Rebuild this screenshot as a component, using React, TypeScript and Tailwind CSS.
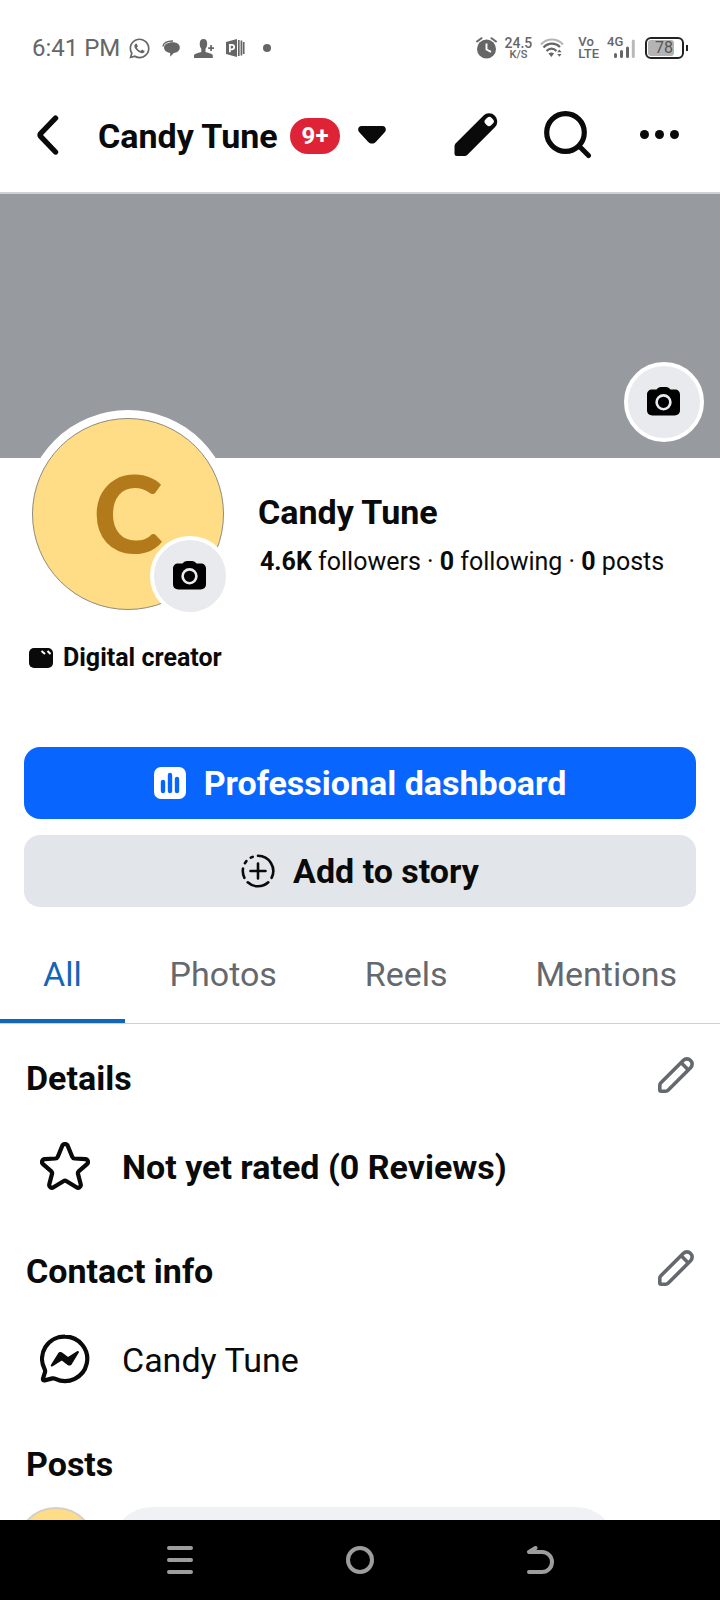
import { FaWhatsapp } from "react-icons/fa";

function ChatBubbleIcon() {
  return (
    <svg width="18" height="17" viewBox="0 0 18 17" fill="none">
      <path d="M.8 6.500C1.500 3 4.500 .9 11 1" stroke="#666" strokeWidth="1.300" />
      <path d="M10.500 2.200c4.600 0 7.300 2.200 7.300 5.200 0 3.200-2.600 5.200-6 5.500L8.200 16.800 8.200 13C4.800 12.600 2 10.500 2 7.600c0-3.100 3.500-5.400 8.500-5.400z" fill="#666" />
    </svg>
  );
}

function PersonAddIcon() {
  return (
    <svg width="20" height="19" viewBox="0 0 20 19" fill="#666">
      <path d="M9.500 0c2.600 0 3.700 2 3.700 4.800 0 2.300-.8 3.900-1.700 5V13c1.500.8 6.500 1.200 7.300 3.200V19H0v-2.800c.8-2 5.800-2.400 7.300-3.200V9.800c-.9-1.100-1.600-2.700-1.600-5C5.700 2 6.900 0 9.500 0z" />
      <path d="M16.200 6h1.700v2.200H20v1.700h-2.100v2.200h-1.700V9.900h-2V8.200h2z" />
    </svg>
  );
}

function OfficeIcon() {
  return (
    <svg width="19" height="18" viewBox="0 0 19 18" fill="none">
      <path d="M0 3l11-3v18L0 15z" fill="#666" />
      <path d="M3.900 13.200V5.800h2a2.200 2.200 0 0 1 0 4.600h-2" stroke="#fff" strokeWidth="1.700" />
      <path d="M12.800 1v16M15.400 1.500v15M17.700 3v12" stroke="#666" strokeWidth="1.700" />
    </svg>
  );
}

function AlarmIcon() {
  return (
    <svg width="21" height="22" viewBox="0 0 21 22" fill="none">
      <circle cx="10.500" cy="12" r="9.500" fill="#666" />
      <path d="M1 4.500L5.500 1.200M20 4.500L15.500 1.200" stroke="#666" strokeWidth="2" strokeLinecap="round" />
      <path d="M10.500 6.500v6l4.500 2.300" stroke="#fff" strokeWidth="1.900" />
    </svg>
  );
}

function WifiIcon() {
  return (
    <svg width="24" height="20" viewBox="0 0 24 20" fill="none" strokeWidth="2.200">
      <path d="M1 6.500C7-.2 17-.2 23 6.500" stroke="#b5b5b5" />
      <path d="M3.500 9.500c4.800-5 12-5 16.500-.4" stroke="#666" />
      <path d="M6.500 13c3-3.200 7-3.200 10 0" stroke="#666" />
      <path d="M8.500 15.500c1.600-1.500 4-1.500 5.600 0L11.300 19z" fill="#666" />
      <path d="M17.200 14.300l2.200-2.800 2.200 2.800zM17.200 16l2.200 2.800 2.200-2.800z" fill="#666" />
    </svg>
  );
}

function SignalIcon() {
  return (
    <svg width="28" height="21" viewBox="0 0 28 21" strokeWidth="3" strokeLinecap="round">
      <path d="M8.500 18.500v-2M14.500 18.500v-5M20.500 18.500V10" stroke="#666" />
      <path d="M26.300 18.500V3" stroke="#b9b9b9" />
    </svg>
  );
}

function Battery() {
  return (
    <div className="flex items-center gap-0.5">
      <div className="h-[22px] w-[39px] rounded-md border-2 border-[#222] p-px">
        <div className="flex h-full w-[26px] items-center justify-center rounded-[3px] bg-[#b4b4b4] pl-1.5 text-base leading-none text-[#555]">
          78
        </div>
      </div>
      <div className="h-1.5 w-0.5 bg-[#222]" />
    </div>
  );
}

function StatusBar() {
  return (
    <div className="flex h-20 items-center justify-between pt-4 pr-8 pl-8 text-[#666]">
      <div className="flex items-center">
        <span className="text-2xl">6:41 PM</span>
        <FaWhatsapp className="ml-2 size-[23px]" />
        <span className="ml-[11px]">
          <ChatBubbleIcon />
        </span>
        <span className="ml-3.5">
          <PersonAddIcon />
        </span>
        <span className="ml-3">
          <OfficeIcon />
        </span>
        <span className="ml-[18px] size-2 rounded-full bg-[#666]" />
      </div>
      <div className="flex items-center">
        <AlarmIcon />
        <div className="ml-2 flex flex-col items-center font-medium">
          <span className="text-[14px] leading-[14px]">24.5</span>
          <span className="text-[11px] leading-[10px]">K/S</span>
        </div>
        <span className="ml-2">
          <WifiIcon />
        </span>
        <div className="ml-3.5 flex flex-col text-[13px] leading-3 font-medium">
          <span>Vo</span>
          <span>LTE</span>
        </div>
        <div className="relative ml-2">
          <SignalIcon />
          <span className="absolute -top-0.5 left-0 text-[13px] leading-3 font-medium">4G</span>
        </div>
        <div className="ml-2.5">
          <Battery />
        </div>
      </div>
    </div>
  );
}

function SolidPencil() {
  return (
    <svg width="44" height="44" viewBox="0 0 44 44">
      <path
        d="M.5 33.500c0-1.400.5-2.600 1.500-3.600L29.300 2.700a8.200 8.200 0 0 1 11.600 11.600L13.700 41.600c-1 1-2.300 1.500-3.700 1.500H3A2.500 2.500 0 0 1 .5 40.600z"
        fill="#0a0a0a"
      />
      <rect x="-4" y="-4.500" width="8" height="8.500" rx="3" transform="translate(35 8.700) rotate(45)" fill="#fff" />
    </svg>
  );
}

function OutlinePencil() {
  return (
    <svg width="36" height="36" viewBox="0 0 36 36" fill="none" stroke="#65686c" strokeWidth="3.600" strokeLinejoin="round">
      <path d="M1.800 28.300c0-1 .4-1.900 1.100-2.600L25.200 3.400a5.200 5.200 0 0 1 7.400 7.400L10.300 33.100c-.7.700-1.600 1.100-2.600 1.100H3.300a1.500 1.500 0 0 1-1.500-1.500z" />
      <path d="M23 5.600l7.400 7.400" />
    </svg>
  );
}

function Header() {
  return (
    <header className="flex h-[114px] items-center justify-between border-b-2 border-[#cfd2d5] pr-[41px] pl-[35px]">
      <div className="flex items-center">
        <button aria-label="Back" className="pb-[3px]">
          <svg width="24" height="42" viewBox="0 0 24 42" fill="none" stroke="#0a0a0a" strokeWidth="5.400" strokeLinecap="round" strokeLinejoin="round">
            <path d="M20.500 4.200L5.600 19.600c-.8.800-.8 2 0 2.800L20.500 38" />
          </svg>
        </button>
        <button className="ml-[39px] flex items-center">
          <span className="text-[34px] leading-10 font-bold">Candy Tune</span>
          <span className="ml-3 flex h-9 items-center rounded-full bg-[#de2337] px-3 text-2xl font-bold text-white">9+</span>
          <svg className="mb-0.5 ml-[18px]" width="28" height="18" viewBox="0 0 28 18" fill="#0a0a0a">
            <path d="M3.500 0h21c3.200 0 4.500 4 2.200 6.200L18 15.700c-2.200 2.500-5.800 2.500-8 0L1.300 6.200C-1 4 .3 0 3.500 0z" />
          </svg>
        </button>
      </div>
      <div className="flex items-center pb-[3px]">
        <button aria-label="Edit">
          <SolidPencil />
        </button>
        <button aria-label="Search" className="ml-[46px]">
          <svg width="48" height="48" viewBox="0 0 48 48" fill="none" stroke="#0a0a0a">
            <circle cx="21.500" cy="21.500" r="18.800" strokeWidth="5.200" />
            <path d="M35.500 35.500l9 9" strokeWidth="5" strokeLinecap="round" />
          </svg>
        </button>
        <button aria-label="More" className="ml-12 flex gap-1.5">
          <span className="size-[9px] rounded-full bg-[#0a0a0a]" />
          <span className="size-[9px] rounded-full bg-[#0a0a0a]" />
          <span className="size-[9px] rounded-full bg-[#0a0a0a]" />
        </button>
      </div>
    </header>
  );
}

function CameraButton({ label }: { label: string }) {
  return (
    <button
      aria-label={label}
      className="flex size-20 items-center justify-center rounded-full border-4 border-white bg-[#e8eaed] pr-px pb-0.5"
    >
      <svg width="33" height="29" viewBox="0 0 33 29">
        <path
          d="M9.500 2.600C10.800 1 12 0 14 0h5c2 0 3.200 1 4.500 2.600h4.300c3.200 0 5.200 2 5.200 5.200V23c0 3.400-2 5.400-5.400 5.400H5.400C2 28.400 0 26.400 0 23V7.800c0-3.200 2-5.200 5.200-5.200z"
          fill="#000"
        />
        <circle cx="16.500" cy="15.300" r="6.900" fill="none" stroke="#e8eaed" strokeWidth="2.600" />
      </svg>
    </button>
  );
}

function Profile() {
  return (
    <section className="px-6">
      <div className="relative -mt-12 flex">
        <div className="relative size-52 shrink-0 rounded-full bg-white p-2">
          <div className="flex size-48 items-center justify-center rounded-full border border-[#8f8a7c] bg-[#ffdd87] pb-1 font-[Lato,sans-serif] text-[106px] leading-none font-black text-[#b27a1b]">
            C
          </div>
          <div className="absolute right-0.5 bottom-0.5">
            <CameraButton label="Change profile picture" />
          </div>
        </div>
        <div className="ml-[26px] flex flex-col gap-3.5 pt-[82px]">
          <h1 className="text-[34px] leading-10 font-bold">Candy Tune</h1>
          <p className="pl-0.5 text-[25px] leading-8">
            <b>4.6K</b> followers · <b>0</b> following · <b>0</b> posts
          </p>
        </div>
      </div>
      <div className="mt-6 flex items-center gap-2.5 pl-[5px]">
        <svg width="24" height="20" viewBox="0 0 24 20">
          <rect width="24" height="20" rx="5" fill="#0a0a0a" />
          <path d="M12.500 3l3.500 3M18.500 3l3 3" stroke="#fff" strokeWidth="2" />
        </svg>
        <span className="text-[25px] leading-8 font-bold">Digital creator</span>
      </div>
      <div className="mt-[73px] flex flex-col gap-4">
        <button className="flex h-[72px] items-center justify-center gap-[18px] rounded-2xl bg-[#0866ff] text-[34px] leading-10 font-bold text-white">
          <svg width="32" height="32" viewBox="0 0 32 32">
            <rect width="32" height="32" rx="7" fill="#fff" />
            <path d="M9 15v9M16 8v16M23 12v12" stroke="#0866ff" strokeWidth="4.400" strokeLinecap="round" />
          </svg>
          Professional dashboard
        </button>
        <button className="flex h-[72px] items-center justify-center gap-[18px] rounded-2xl bg-[#e2e5e9] text-[34px] leading-10 font-bold">
          <svg width="34" height="34" viewBox="0 0 34 34" fill="none" stroke="#0a0a0a" strokeWidth="2.600" strokeLinecap="round">
            <path d="M17 1.800A15.200 15.200 0 0 1 30.600 23.800M27.300 28.300A15.200 15.200 0 0 1 6.700 28.300M3.400 23.800A15.200 15.200 0 0 1 2 14.500M3.900 9.200L5.400 7M9.800 3.700l1.900-.9" />
            <path d="M17 9.500v15M9.500 17h15" />
          </svg>
          Add to story
        </button>
      </div>
    </section>
  );
}

function Tabs() {
  const tabs = ["All", "Photos", "Reels", "Mentions"];
  return (
    <nav className="mt-6 flex justify-between border-b border-[#cfd2d5]">
      {tabs.map((tab, i) => (
        <a
          key={tab}
          href={"#" + tab.toLowerCase()}
          className={
            i === 0
              ? "flex h-[92px] items-center border-b-4 border-[#1266b8] px-[43px] pb-0.5 text-[34px] leading-10 text-[#1266b8]"
              : "flex h-[92px] items-center border-b-4 border-transparent px-[43px] pb-0.5 text-[34px] leading-10 text-[#65686c]"
          }
        >
          {tab}
        </a>
      ))}
    </nav>
  );
}

function SectionTitle({ title }: { title: string }) {
  return (
    <div className="flex h-10 items-center justify-between pr-[26px] pl-[26px]">
      <h2 className="text-[34px] leading-10 font-bold">{title}</h2>
      <button aria-label={"Edit " + title} className="-mt-1.5">
        <OutlinePencil />
      </button>
    </div>
  );
}

function Details() {
  return (
    <div className="pt-[34px]">
      <section>
        <SectionTitle title="Details" />
        <div className="mt-[45px] flex h-12 items-center gap-8 pl-10 text-[34px] leading-10 font-bold">
          <svg className="mb-[3px]" width="50" height="48" viewBox="0 0 50 48" fill="none" stroke="#0a0a0a" strokeWidth="4.200" strokeLinejoin="round">
            <path d="M22.300 3.700c1-2.300 4.400-2.300 5.400 0l4.500 11.100c.4 1 1.300 1.600 2.400 1.700l10.700.7c2.600.2 3.600 3.200 1.700 4.900l-8.100 7c-.8.700-1.200 1.800-.9 2.800l2.700 10.400c.6 2.500-2.100 4.400-4.200 3l-9.900-6.100c-1-.6-2.200-.6-3.200 0l-9.900 6.100c-2.100 1.400-4.800-.5-4.200-3L12 31.900c.3-1-.1-2.100-.9-2.800l-8.100-7c-1.900-1.700-.9-4.700 1.700-4.900l10.700-.7c1.100-.1 2-.7 2.400-1.700z" />
          </svg>
          Not yet rated (0 Reviews)
        </div>
      </section>
      <section className="mt-[60px]">
        <SectionTitle title="Contact info" />
        <div className="mt-[45px] flex h-12 items-center gap-8 pl-10 text-[34px] leading-10">
          <svg className="mb-[3px]" width="50" height="50" viewBox="0 0 50 50">
            <path
              d="M25 2.600a22.200 22.200 0 1 1-9.600 42.200c-1-.5-2-.6-3-.4l-7.800 2c-1.100.2-1.900-.7-1.600-1.800l2-6.500c.3-1 .1-2-.4-3A22.200 22.200 0 0 1 25 2.600z"
              fill="none"
              stroke="#0a0a0a"
              strokeWidth="4.200"
            />
            <path
              d="M11 30.800l7-11.300c1-1.500 3-1.900 4.400-.8l5 3.900c.4.300 1 .3 1.400 0l8.200-5.400c1.200-.8 2.500.4 1.700 1.600l-6.800 11.100c-.9 1.600-2.900 2-4.300 1l-5.200-4c-.4-.3-1-.3-1.400 0l-8.300 5.400c-1.200.8-2.500-.3-1.700-1.500z"
              fill="#0a0a0a"
            />
          </svg>
          Candy Tune
        </div>
      </section>
      <section className="mt-[60px]">
        <h2 className="pl-[26px] text-[34px] leading-10 font-bold">Posts</h2>
        <div className="mt-[23px] flex pr-[104px] pl-4">
          <div className="size-20 shrink-0 rounded-full border-2 border-[#d5d0c5] bg-[#ffdd87]" />
          <button aria-label="Write a post" className="ml-4 h-20 flex-1 rounded-full bg-[#f0f1f5]" />
        </div>
      </section>
    </div>
  );
}

function SystemNav() {
  return (
    <div className="grid h-20 shrink-0 grid-cols-3 place-items-center bg-black px-[12.5%]">
      <button aria-label="Recent apps" className="flex flex-col gap-2">
        <span className="h-1 w-[26px] rounded-sm bg-[#9d9d9d]" />
        <span className="h-1 w-[26px] rounded-sm bg-[#9d9d9d]" />
        <span className="h-1 w-[26px] rounded-sm bg-[#9d9d9d]" />
      </button>
      <button aria-label="Home" className="size-7 rounded-full border-4 border-[#9d9d9d]" />
      <button aria-label="Back">
        <svg width="28" height="28" viewBox="0 0 28 28" fill="none" stroke="#9d9d9d" strokeWidth="4" strokeLinecap="round" strokeLinejoin="round">
          <path d="M9.500 2L3 6h13a9.900 9.900 0 0 1 0 20H3" />
        </svg>
      </button>
    </div>
  );
}

export default function App() {
  return (
    <div className="flex h-screen flex-col bg-white font-[Roboto,sans-serif] text-[#0a0a0a]">
      <main className="min-h-0 flex-1 overflow-y-auto [scrollbar-width:none]">
        <StatusBar />
        <Header />
        <div className="flex h-[264px] items-end justify-end bg-[#979a9f] p-4">
          <CameraButton label="Change cover photo" />
        </div>
        <Profile />
        <Tabs />
        <Details />
      </main>
      <SystemNav />
    </div>
  );
}
